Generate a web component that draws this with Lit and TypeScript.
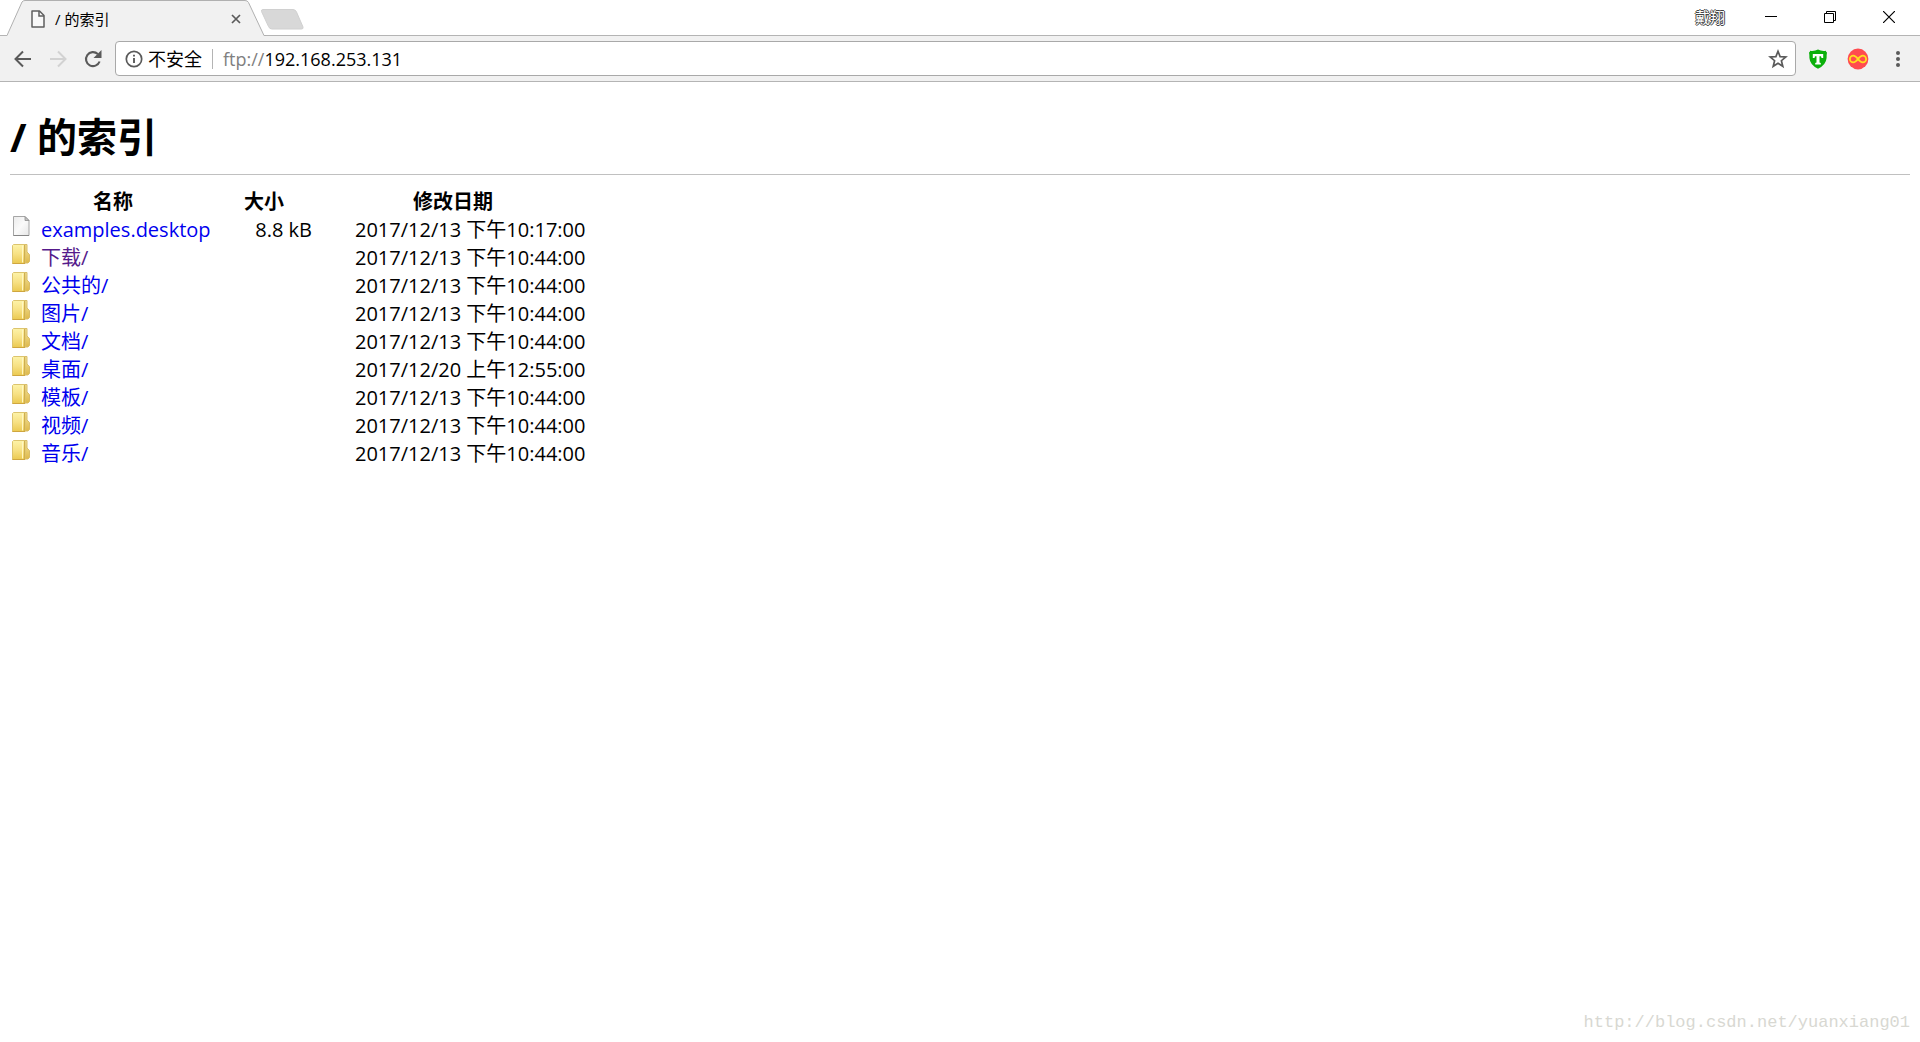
import { LitElement, html, css } from "lit";
import { customElement, property } from "lit/decorators.js";

interface Entry {
  name: string;
  folder: boolean;
  size?: string;
  modified: string;
  visited?: boolean;
}

const folder = (name: string, modified = "2017/12/13 下午10:44:00", visited = false): Entry => ({
  name, folder: true, modified, visited,
});

const ENTRIES: Entry[] = [
  { name: "examples.desktop", folder: false, size: "8.8 kB", modified: "2017/12/13 下午10:17:00" },
  folder("下载/", "2017/12/13 下午10:44:00", true),
  folder("公共的/"),
  folder("图片/"),
  folder("文档/"),
  folder("桌面/", "2017/12/20 上午12:55:00"),
  folder("模板/"),
  folder("视频/"),
  folder("音乐/"),
];

const fileIcon = html`<svg class="icon" width="20" height="20" viewBox="0 0 20 20" aria-hidden="true">
  <defs><linearGradient id="paper" x1="0" y1="0" x2="1" y2="1"><stop offset="0" stop-color="#ebebeb"/><stop offset=".5" stop-color="#fafafa"/><stop offset="1" stop-color="#e6e6e6"/></linearGradient></defs>
  <path d="M1.500.5h11.500l4 4v15H1.500z" fill="url(#paper)" stroke="#a6a6a6"/>
  <path d="M13 .5v4h4z" fill="#c4c4c4" stroke="#8e8e8e" stroke-width=".8"/>
  <path d="M1.500 19.500h15.500" stroke="#868686"/>
</svg>`;

const folderIcon = html`<svg class="icon" width="20" height="20" viewBox="0 0 20 20" aria-hidden="true">
  <defs>
    <linearGradient id="front" x1="0" y1="0" x2="0" y2="1"><stop offset="0" stop-color="#fdf3a9"/><stop offset=".5" stop-color="#f7e184"/><stop offset="1" stop-color="#ebc950"/></linearGradient>
    <linearGradient id="back" x1="0" y1="0" x2="0" y2="1"><stop offset="0" stop-color="#f3e49b"/><stop offset="1" stop-color="#dfb94a"/></linearGradient>
  </defs>
  <path d="M11 .5h4v7.500l2.500 2.500v7l-1.500 1.500H11z" fill="url(#back)" stroke="#d9bd68"/>
  <path d="M.5 1.500l1-1H12l1 1v18H.5z" fill="url(#front)" stroke="#dcc46e"/>
  <path d="M10.500 1.500v17" stroke="#fff6c4"/>
  <path d="M12.500 1v18.500" stroke="#cfae50"/>
  <path d="M.5 19.500H13" stroke="#cfa63f"/>
</svg>`;

@customElement("tab-strip")
export class TabStrip extends LitElement {
  @property() label = "";

  static styles = css`
    :host { display: block; }
    .strip {
      display: flex; align-items: flex-start; height: 35px; background: #fff;
      border-bottom: 1px solid #b4b4b4; padding: 0 2px 0 7px;
    }
    .tab {
      position: relative; display: flex; align-items: center; width: 259px; height: 36px;
      box-sizing: border-box; padding: 2px 23px 0 24px;
    }
    .shape { position: absolute; left: 0; top: 0; }
    .doc, .label, .close { position: relative; }
    .doc { flex: none; }
    .label {
      flex: 1; margin-left: 10px; white-space: nowrap;
      font: 15px/20px "Open Sans", "Noto Sans CJK SC", sans-serif; color: #000;
    }
    button { border: 0; padding: 0; background: none; display: flex; align-items: center; justify-content: center; }
    .close { width: 14px; height: 20px; }
    .new { margin: 9px auto 0 -5px; }
    .user {
      height: 33px; margin-right: 16px; font: 15px/33px "Noto Sans CJK SC", sans-serif; color: #fff;
      text-shadow: 1px 0 #444, -1px 0 #444, 0 1px #444, 0 -1px #444;
    }
    .win { width: 59px; height: 34px; }
  `;

  render() {
    return html`<header class="strip">
      <div class="tab">
        <svg class="shape" width="259" height="36" viewBox="0 0 259 36" aria-hidden="true">
          <path d="M0 35.500L15 2q1-1.500 3-1.500H238q2.500 0 3.500 2L257 35.500V36H0z" fill="#f1f1f1"/>
          <path d="M0 35.500L15 2q1-1.500 3-1.500H238q2.500 0 3.500 2L257 35.500h2" fill="none" stroke="#b0b0b0"/>
        </svg>
        <svg class="doc" width="14" height="18" viewBox="0 0 14 18" aria-hidden="true">
          <path d="M1 1h7.500l4.500 4.500V17H1z" fill="#f8f8f8" stroke="#5f5f5f" stroke-width="1.500" stroke-linejoin="round"/>
          <path d="M8 1v5h5" fill="none" stroke="#5f5f5f" stroke-width="1.500"/>
        </svg>
        <span class="label">${this.label}</span>
        <button class="close" aria-label="关闭标签页">
          <svg width="10" height="10" viewBox="0 0 10 10"><path d="M1 1l8 8M9 1l-8 8" stroke="#5a5a5a" stroke-width="1.700"/></svg>
        </button>
      </div>
      <button class="new" aria-label="新标签页">
        <svg width="43" height="21" viewBox="0 0 43 21"><path d="M2 .5H32q2.500 0 3.500 2.500L42 18q.5 2-1.500 2H11q-2.500 0-3.500-2.500L.5 2.500Q0 .5 2 .5z" fill="#d8d8d8" stroke="#d0d0d0"/></svg>
      </button>
      <button class="user">戴翔</button>
      <button class="win" aria-label="最小化"><svg width="12" height="12" viewBox="0 0 12 12"><path d="M0 5.500h12" stroke="#000"/></svg></button>
      <button class="win" aria-label="还原"><svg width="12" height="12" viewBox="0 0 12 12"><path d="M.5 2.500h9v9h-9zM2.500 2.500v-2h9v9h-2" fill="none" stroke="#000"/></svg></button>
      <button class="win" aria-label="关闭"><svg width="12" height="12" viewBox="0 0 12 12"><path d="M0 0l12 12M12 0L0 12" stroke="#000" stroke-width="1.200"/></svg></button>
    </header>`;
  }
}

@customElement("nav-bar")
export class NavBar extends LitElement {
  @property() scheme = "";
  @property() address = "";

  static styles = css`
    :host { display: block; }
    .bar {
      display: flex; align-items: center; height: 45px; padding: 0 11px 0 5px;
      background: #f1f1f1; border-bottom: 1px solid #b4b4b4;
    }
    button { border: 0; padding: 0; background: none; display: flex; align-items: center; justify-content: center; }
    .nav { width: 35px; height: 36px; }
    .box {
      flex: 1; min-width: 0; display: flex; align-items: center; height: 33px; margin: 0 11px 0 5px; padding: 0 7px 0 9px;
      background: #fff; border: 1px solid #a9a9a9; border-radius: 4px;
      font: 18px/24px "Open Sans", "Noto Sans CJK SC", sans-serif;
    }
    .secure { gap: 5px; font: inherit; color: #000; }
    .rule { width: 1px; height: 20px; margin: 0 10px; background: #b4b4b4; }
    .scheme { color: #808080; }
    input { flex: 1; min-width: 0; border: 0; outline: 0; padding: 0; background: none; font: inherit; color: #000; }
    .ext { width: 22px; height: 32px; margin-right: 18px; }
    .menu { width: 22px; height: 32px; }
  `;

  render() {
    return html`<nav class="bar">
      <button class="nav" aria-label="后退"><svg width="18" height="18" viewBox="0 0 18 18"><path d="M17 9H2M9 1.500L1.500 9l7.500 7.500" fill="none" stroke="#5a5a5a" stroke-width="2"/></svg></button>
      <button class="nav" aria-label="前进" disabled><svg width="18" height="18" viewBox="0 0 18 18"><path d="M1 9h15M9 1.500L16.500 9 9 16.500" fill="none" stroke="#d2d2d2" stroke-width="2"/></svg></button>
      <button class="nav" aria-label="重新加载"><svg width="18" height="18" viewBox="0 0 18 18"><path d="M15.600 11.500A7 7 0 1 1 13.800 4" fill="none" stroke="#5a5a5a" stroke-width="2.100"/><path d="M17.500 0v8h-8z" fill="#5a5a5a"/></svg></button>
      <div class="box">
        <button class="secure">
          <svg width="18" height="18" viewBox="0 0 18 18" aria-hidden="true"><circle cx="9" cy="9" r="7.700" fill="none" stroke="#5a5a5a" stroke-width="1.700"/><path d="M9 8v5M9 4.700v1.900" stroke="#5a5a5a" stroke-width="1.900"/></svg>
          不安全
        </button>
        <span class="rule"></span>
        <label class="scheme" for="address">${this.scheme}</label>
        <input id="address" type="text" spellcheck="false" .value=${this.address} />
        <button aria-label="添加书签"><svg width="20" height="20" viewBox="0 0 20 20"><path d="M10 2.300l2.100 5.300 5.700.4-4.400 3.700 1.400 5.600L10 14.200l-4.800 3.100 1.400-5.600L2.200 8l5.700-.4z" fill="none" stroke="#5a5a5a" stroke-width="1.700"/></svg></button>
      </div>
      <button class="ext" aria-label="盾牌扩展"><svg width="20" height="20" viewBox="0 0 20 20">
        <path d="M10 .5Q13.500 2.500 18 1.800q-.3 1.200 1 1.700Q18.500 6 18.600 9 18 16 10 19.700 2 16 1.400 9 1.500 6 1 3.500 2.300 3 2 1.800 6.500 2.500 10 .5z" fill="#0bb00b"/>
        <path d="M4.800 5h10.400v4h-1.700L13 7.300h-1.500v6.200l1.300.5v1.500H7.200V14l1.300-.5V7.300H7L6.500 9H4.800z" fill="#fff"/>
      </svg></button>
      <button class="ext" aria-label="无限扩展"><svg width="22" height="22" viewBox="0 0 22 22">
        <circle cx="11" cy="11" r="10.400" fill="#ff4b4f"/>
        <path d="M11 11C9 8.500 7.900 7.600 6.300 7.600a3.400 3.400 0 0 0 0 6.800C7.900 14.400 9 13.500 11 11s3.100-3.400 4.700-3.400a3.400 3.400 0 0 1 0 6.800C14.100 14.400 13 13.500 11 11z" fill="none" stroke="#ffe01e" stroke-width="1.800"/>
      </svg></button>
      <button class="menu" aria-label="菜单"><svg width="4" height="18" viewBox="0 0 4 18"><circle cx="2" cy="3" r="2" fill="#5a5a5a"/><circle cx="2" cy="9" r="2" fill="#5a5a5a"/><circle cx="2" cy="15" r="2" fill="#5a5a5a"/></svg></button>
    </nav>`;
  }
}

@customElement("app-root")
export class AppRoot extends LitElement {
  static styles = css`
    :host {
      display: block; position: relative; min-height: 100vh; background: #fff; color: #000;
      font: 20px/28px "Open Sans", "Noto Sans CJK SC", sans-serif;
    }
    main { padding: 27px 10px; }
    h1 {
      margin: 0 0 12px; padding-bottom: 9px; border-bottom: 1px solid #c0c0c0;
      font-size: 40px; line-height: 56px; font-weight: 700;
    }
    table { border-collapse: separate; border-spacing: 2px 0; table-layout: fixed; width: 584px; margin-top: 13px; }
    .c-name { width: 202px; }
    .c-size { width: 96px; }
    th, td { padding: 0; height: 28px; white-space: nowrap; }
    th { font-weight: 700; }
    .entry { display: flex; gap: 9px; }
    .icon { flex: none; }
    a { color: #0000ee; text-decoration: none; }
    .visited { color: #551a8b; }
    .size { text-align: right; }
    .date { padding-left: 41px; }
    .mark {
      position: absolute; right: 10px; bottom: 7px;
      font: 17px/24px "Liberation Mono", monospace; color: #d8d8d2;
    }
  `;

  private row(e: Entry) {
    return html`<tr>
      <td><div class="entry">${e.folder ? folderIcon : fileIcon}<a class=${e.visited ? "visited" : ""} href="#">${e.name}</a></div></td>
      <td class="size">${e.size ?? ""}</td>
      <td class="date">${e.modified}</td>
    </tr>`;
  }

  render() {
    return html`
      <tab-strip label="/ 的索引"></tab-strip>
      <nav-bar scheme="ftp://" address="192.168.253.131"></nav-bar>
      <main>
        <h1>/ 的索引</h1>
        <table>
          <colgroup><col class="c-name" /><col class="c-size" /><col /></colgroup>
          <thead><tr><th>名称</th><th>大小</th><th>修改日期</th></tr></thead>
          <tbody>${ENTRIES.map((e) => this.row(e))}</tbody>
        </table>
      </main>
      <div class="mark">http://blog.csdn.net/yuanxiang01</div>
    `;
  }
}
